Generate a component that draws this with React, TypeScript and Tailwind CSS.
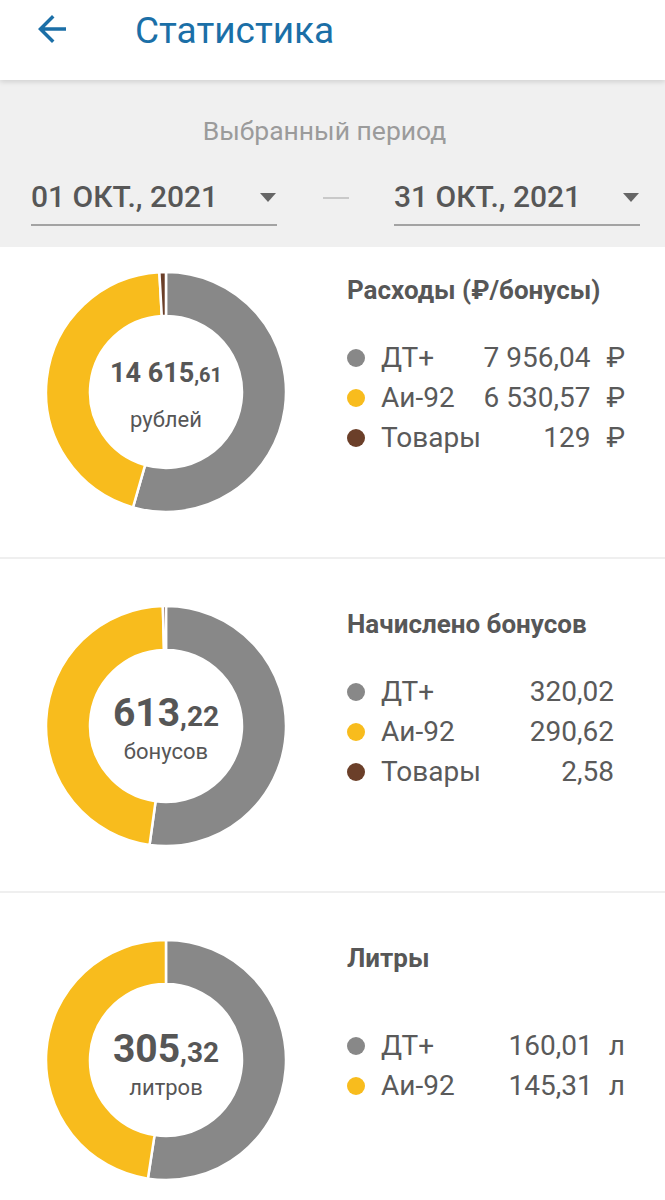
import React from "react";

type Item = {
  label: string;
  value: string;
  unit?: string;
  amount: number;
  color: string;
};

const GRAY = "#888888";
const YELLOW = "#f8bc1d";
const BROWN = "#6b3f29";

const point = (cx: number, cy: number, rad: number, deg: number) => {
  const a = (deg * Math.PI) / 180;
  return [cx + rad * Math.sin(a), cy - rad * Math.cos(a)];
};

const arcPath = (R: number, r: number, a0: number, a1: number) => {
  const c = R;
  const large = a1 - a0 > 180 ? 1 : 0;
  const [x0, y0] = point(c, c, R, a0);
  const [x1, y1] = point(c, c, R, a1);
  const [x2, y2] = point(c, c, r, a1);
  const [x3, y3] = point(c, c, r, a0);
  return `M${x0} ${y0} A${R} ${R} 0 ${large} 1 ${x1} ${y1} L${x2} ${y2} A${r} ${r} 0 ${large} 0 ${x3} ${y3} Z`;
};

const Donut = ({ items }: { items: Item[] }) => {
  const total = items.reduce((s, i) => s + i.amount, 0);
  let start = 0;
  return (
    <svg width="240" height="240" viewBox="0 0 240 240">
      {items.map((item) => {
        const sweep = (item.amount / total) * 360;
        const d = arcPath(120, 76, start, Math.min(start + sweep, 359.99));
        start += sweep;
        return (
          <path
            key={item.label}
            d={d}
            fill={item.color}
            stroke="#ffffff"
            strokeWidth="2.5"
          />
        );
      })}
    </svg>
  );
};

const StatBlock = ({
  title,
  items,
  whole,
  fraction,
  unit,
  sectionClass,
  legendClass,
  centerClass,
  wholeClass,
  fractionClass,
}: {
  title: string;
  items: Item[];
  whole: string;
  fraction: string;
  unit: string;
  sectionClass: string;
  legendClass: string;
  centerClass: string;
  wholeClass: string;
  fractionClass: string;
}) => {
  return (
    <section className={`flex ${sectionClass}`}>
      <div className="relative ml-[46px] h-[240px] w-[240px] shrink-0">
        <Donut items={items} />
        <div
          className={`absolute inset-0 flex flex-col items-center justify-center text-[#565656] ${centerClass}`}
        >
          <p className="font-bold leading-none">
            <span className={wholeClass}>{whole}</span>
            <span className={fractionClass}>{fraction}</span>
          </p>
          <p className="text-[22px] leading-[26px]">{unit}</p>
        </div>
      </div>

      <div className={`ml-[61px] flex h-[240px] flex-1 flex-col pt-[5px] ${legendClass}`}>
        <h2 className="text-[26px] font-bold leading-[26px] text-[#575757]">
          {title}
        </h2>
        <div className="flex flex-1 flex-col justify-center pb-[20px]">
          {items.map((item) => (
            <div
              key={item.label}
              className="flex h-[40px] items-center text-[28px] text-[#5a5a5a]"
            >
              <span
                className="mr-[16px] h-[18px] w-[18px] shrink-0 rounded-full"
                style={{ backgroundColor: item.color }}
              />
              <span className="flex-1">{item.label}</span>
              <span>{item.value}</span>
              {item.unit && <span className="ml-[16px]">{item.unit}</span>}
            </div>
          ))}
        </div>
      </div>
    </section>
  );
};

const DateSelect = ({ text }: { text: string }) => (
  <div className="flex w-[246px] items-center justify-between border-b-2 border-[#a3a3a3] pb-[9px]">
    <span className="text-[30px] font-medium leading-[36px] text-[#575757]">
      {text}
    </span>
    <svg width="16" height="9" viewBox="0 0 16 9" className="mr-[1px]">
      <path d="M0 0h16L8 9z" fill="#666666" />
    </svg>
  </div>
);

export default function App() {
  return (
    <div className="min-h-[1200px] w-[665px] bg-white font-['Roboto',sans-serif]">
      <header className="relative z-10 flex h-[80px] items-start bg-white shadow-[0_2px_5px_rgba(0,0,0,0.13)]">
        <svg
          width="42"
          height="42"
          viewBox="0 0 24 24"
          className="ml-[31px] mt-[8px]"
        >
          <path
            d="M20 11H7.83l5.59-5.59L12 4l-8 8 8 8 1.41-1.41L7.83 13H20v-2z"
            fill="#1b6fa7"
          />
        </svg>
        <h1 className="ml-[62px] mt-[9px] text-[37px] leading-[44px] text-[#1b6fa7]">
          Статистика
        </h1>
      </header>

      <section className="bg-[#f0f0f0] pb-[21px] pl-[31px] pr-[25px] pt-[36px]">
        <p className="pr-[22px] text-center text-[26.5px] leading-[30px] text-[#9b9b9b]">
          Выбранный период
        </p>
        <div className="mt-[33px] flex items-center">
          <DateSelect text="01 ОКТ., 2021" />
          <div className="flex flex-1 justify-center pb-[10px]">
            <div className="h-[2px] w-[26px] bg-[#c9c9c9]" />
          </div>
          <DateSelect text="31 ОКТ., 2021" />
        </div>
      </section>

      <StatBlock
        title="Расходы (₽/бонусы)"
        whole="14 615"
        fraction=",61"
        unit="рублей"
        sectionClass="pt-[25px] pb-[45px] border-b-2 border-[#efefef]"
        legendClass="pr-[40px]"
        centerClass="gap-[20px] pt-[8px]"
        wholeClass="text-[27px]"
        fractionClass="text-[20px]"
        items={[
          { label: "ДТ+", value: "7 956,04", unit: "₽", amount: 7956.04, color: GRAY },
          { label: "Аи-92", value: "6 530,57", unit: "₽", amount: 6530.57, color: YELLOW },
          { label: "Товары", value: "129", unit: "₽", amount: 129, color: BROWN },
        ]}
      />

      <StatBlock
        title="Начислено бонусов"
        whole="613"
        fraction=",22"
        unit="бонусов"
        sectionClass="pt-[47px] pb-[45px] border-b-2 border-[#efefef]"
        legendClass="pr-[51px]"
        centerClass="gap-[6px] pt-[6px]"
        wholeClass="text-[39px]"
        fractionClass="text-[28px]"
        items={[
          { label: "ДТ+", value: "320,02", amount: 320.02, color: GRAY },
          { label: "Аи-92", value: "290,62", amount: 290.62, color: YELLOW },
          { label: "Товары", value: "2,58", amount: 2.58, color: BROWN },
        ]}
      />

      <StatBlock
        title="Литры"
        whole="305"
        fraction=",32"
        unit="литров"
        sectionClass="pt-[47px] pb-[20px]"
        legendClass="pr-[40px]"
        centerClass="gap-[6px] pt-[10px]"
        wholeClass="text-[39px]"
        fractionClass="text-[28px]"
        items={[
          { label: "ДТ+", value: "160,01", unit: "л", amount: 160.01, color: GRAY },
          { label: "Аи-92", value: "145,31", unit: "л", amount: 145.31, color: YELLOW },
        ]}
      />
    </div>
  );
}
